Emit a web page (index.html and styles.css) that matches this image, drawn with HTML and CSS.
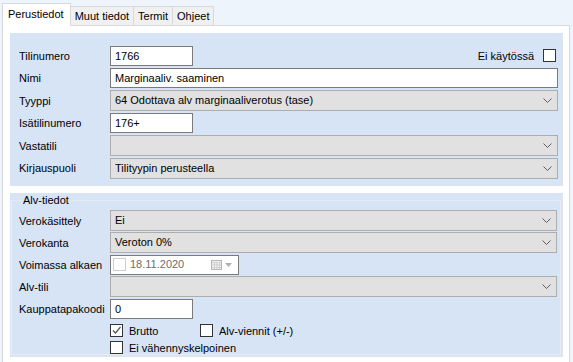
FILE: index.html
```html
<!DOCTYPE html>
<html>
<head>
  <title>Tili</title>
  <link rel="stylesheet" href="styles.css">
</head>
<body>
  <div class="tabs">
    <div class="tab active">Perustiedot</div>
    <div class="tab">Muut tiedot</div>
    <div class="tab">Termit</div>
    <div class="tab">Ohjeet</div>
  </div>

  <div class="page">
    <div class="panel main">
      <div class="form">
        <div class="label">Tilinumero</div>
        <div class="split">
          <div class="box short">1766</div>
          <div class="check right">Ei käytössä <span class="cb"></span></div>
        </div>

        <div class="label">Nimi</div>
        <div class="box">Marginaaliv. saaminen</div>

        <div class="label">Tyyppi</div>
        <div class="select">64 Odottava alv marginaaliverotus (tase)<svg class="chev" width="9" height="5"><path d="M.5 .5 4.5 4.5 8.5 .5" /></svg></div>

        <div class="label">Isätilinumero</div>
        <div><div class="box short">176+</div></div>

        <div class="label">Vastatili</div>
        <div class="select"><svg class="chev" width="9" height="5"><path d="M.5 .5 4.5 4.5 8.5 .5" /></svg></div>

        <div class="label">Kirjauspuoli</div>
        <div class="select">Tilityypin perusteella<svg class="chev" width="9" height="5"><path d="M.5 .5 4.5 4.5 8.5 .5" /></svg></div>
      </div>
    </div>

    <div class="panel alv">
      <fieldset class="group">
        <legend>Alv-tiedot</legend>
        <div class="form">
          <div class="label">Verokäsittely</div>
          <div class="select">Ei<svg class="chev" width="9" height="5"><path d="M.5 .5 4.5 4.5 8.5 .5" /></svg></div>

          <div class="label">Verokanta</div>
          <div class="select">Veroton 0%<svg class="chev" width="9" height="5"><path d="M.5 .5 4.5 4.5 8.5 .5" /></svg></div>

          <div class="label">Voimassa alkaen</div>
          <div>
            <div class="date">
              <span class="cb off"></span>
              <span class="date-text">18.11.2020</span>
              <svg class="cal" width="21" height="10">
                <rect x="0.5" y="0.5" width="10" height="9" fill="#f4f4f4" stroke="#b4b4b4" />
                <path d="M1 2.5h9M3.5 3v6M6 3v6M8.5 3v6M1 5h9M1 7.5h9" stroke="#cfcfcf" />
                <path d="M14 3h7l-3.5 4z" fill="#b0b0b0" />
              </svg>
            </div>
          </div>

          <div class="label">Alv-tili</div>
          <div class="select"><svg class="chev" width="9" height="5"><path d="M.5 .5 4.5 4.5 8.5 .5" /></svg></div>

          <div class="label">Kauppatapakoodi</div>
          <div><div class="box short">0</div></div>

          <div class="label"></div>
          <div class="checks">
            <div class="check-line">
              <div class="check wide"><span class="cb"><svg width="11" height="11"><path d="M2 5.5 4.5 8 9.5 2" /></svg></span>Brutto</div>
              <div class="check"><span class="cb"></span>Alv-viennit (+/-)</div>
            </div>
            <div class="check-line">
              <div class="check"><span class="cb"></span>Ei vähennyskelpoinen</div>
            </div>
          </div>
        </div>
      </fieldset>
    </div>
  </div>
</body>
</html>
```

FILE: styles.css
```css
body {
  margin: 0;
  background-color: #eef4fc;
  font-family: "Liberation Sans", Arial, sans-serif;
  font-size: 11px;
  color: #000;
  height: 362px;
  overflow: hidden;
}

.tabs {
  display: flex;
  align-items: flex-end;
  height: 21px;
  padding: 4px 0 0 2px;
}

.tab {
  height: 18px;
  line-height: 18px;
  padding: 0 4px;
  margin-left: -1px;
  background-color: #f0f0f0;
  border: 1px solid #d9d9d9;
  border-bottom: none;
}

.tab.active {
  position: relative;
  z-index: 1;
  height: 22px;
  line-height: 21px;
  margin-left: 0;
  margin-bottom: -1px;
  padding: 0 6px 0 5px;
  background-color: #fff;
}

.page {
  margin-left: 2px;
  width: 568px;
  height: 340px;
  box-sizing: border-box;
  background-color: #fff;
  border: 1px solid #d9d9d9;
  padding: 7px 6px 0 7px;
}

.panel {
  background-color: #d7e4f6;
  border-right: 1px solid #dfe4ea;
  border-bottom: 1px solid #dfe4ea;
}

.panel.main {
  height: 153px;
  box-sizing: border-box;
  padding: 12px 4px 0 9px;
}

.panel.alv {
  margin-top: 7px;
  height: 164px;
  box-sizing: border-box;
  padding: 0 1px 1px 1px;
}

.group {
  margin: 0;
  height: 162px;
  box-sizing: border-box;
  border: 1px solid #e6ecf5;
  padding: 2px 3px 0 7px;
}

.group legend {
  margin-left: 2px;
  padding: 0 2px;
  line-height: 15px;
}

.form {
  display: grid;
  grid-template-columns: 91px 1fr;
  grid-auto-rows: 21px;
  row-gap: 1.5px;
  align-items: center;
}

.alv .form {
  row-gap: 1px;
  grid-template-rows: repeat(5, 21px) 36px;
}

.label {
  white-space: nowrap;
}

.split {
  display: flex;
  align-items: center;
  justify-content: space-between;
}

.box,
.select,
.date {
  height: 21px;
  box-sizing: border-box;
  padding: 0 4px;
  line-height: 19px;
  white-space: nowrap;
}

.box {
  background-color: #fff;
  border: 1px solid #7a7a7a;
  height: 20px;
  line-height: 18px;
}

.box.short {
  width: 83px;
}

.select {
  display: flex;
  align-items: center;
  background-color: #e1e1e1;
  border: 1px solid #adadad;
}

.chev {
  margin-left: auto;
  margin-right: 1px;
}

.chev path {
  fill: none;
  stroke: #5f5f5f;
}

.date {
  display: flex;
  align-items: center;
  width: 129px;
  height: 20px;
  padding: 0 0 0 2px;
  background-color: #fff;
  border: 1px solid #7a7a7a;
}

.date-text {
  margin-left: 4px;
  color: #6d6d6d;
}

.cal {
  margin-left: auto;
  margin-right: 6px;
}

.cb {
  display: inline-block;
  width: 13px;
  height: 13px;
  box-sizing: border-box;
  border: 1px solid #333;
  background-color: #fff;
  vertical-align: middle;
}

.cb svg {
  display: block;
}

.cb svg path {
  fill: none;
  stroke: #555;
  stroke-width: 1.2;
}

.cb.off {
  border-color: #cfcfcf;
}

.check {
  display: flex;
  align-items: center;
  gap: 6px;
}

.check.right {
  margin-right: 2px;
  gap: 9px;
}

.check.wide {
  width: 90px;
}

.checks {
  align-self: start;
  padding-top: 2px;
}

.check-line {
  display: flex;
  height: 17px;
  align-items: center;
}
```
